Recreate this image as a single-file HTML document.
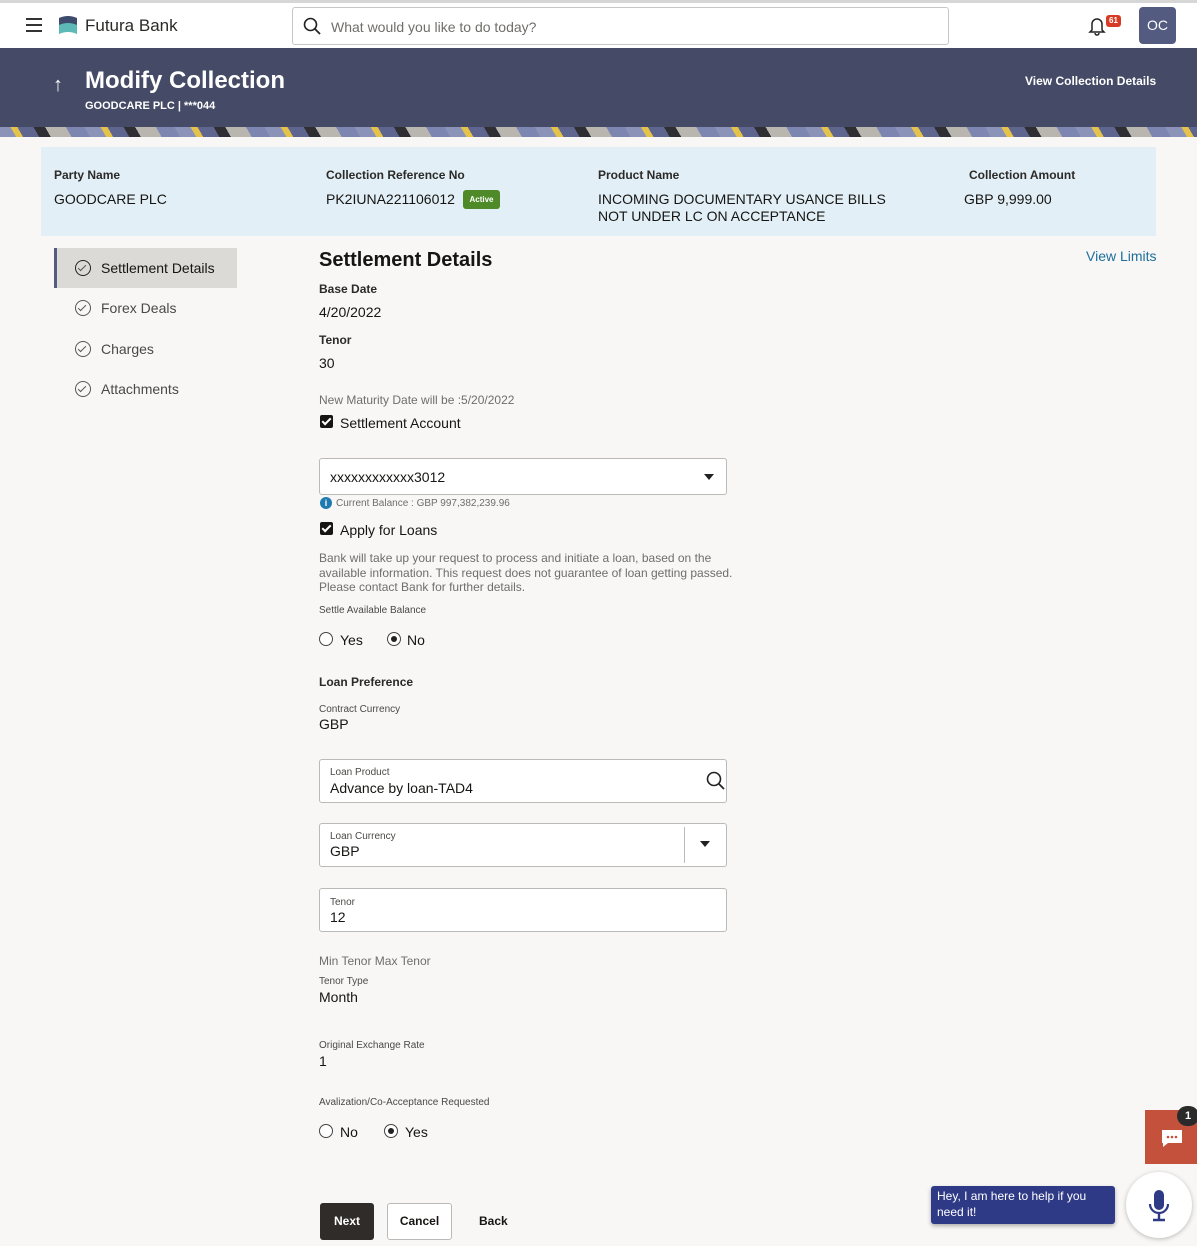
<!DOCTYPE html>
<html><head><meta charset="utf-8">
<style>
*{margin:0;padding:0;box-sizing:border-box}
body{width:1197px;height:1246px;background:#f8f7f5;font-family:"Liberation Sans",sans-serif;color:#161513;position:relative;overflow:hidden}
.a{position:absolute;white-space:nowrap}
.lbl{font-size:12px;font-weight:bold;color:#2b2a28}
.val{font-size:14px;color:#161513}
.sm{font-size:10px;color:#4a4947}
.box{position:absolute;left:319px;width:408px;background:#fff;border:1px solid #bcbab6;border-radius:3px}
.radio{position:absolute;width:14px;height:14px;border:1.5px solid #444;border-radius:50%;background:#fff}
.radio.on::after{content:"";position:absolute;left:2.5px;top:2.5px;width:6px;height:6px;border-radius:50%;background:#222}
.chk{position:absolute;width:13px;height:13px;background:#161513;border-radius:2px}
.chk::after{content:"";position:absolute;left:4px;top:1px;width:3px;height:7px;border:solid #fff;border-width:0 2px 2px 0;transform:rotate(45deg)}
.nav{position:absolute;left:54px;width:183px;height:40px;font-size:14px;color:#4a4947}
.nav .c{position:absolute;left:21px;top:12px;width:16px;height:16px;border:1.5px solid #555;border-radius:50%}
.nav .c::after{content:"";position:absolute;left:4px;top:1.5px;width:3px;height:7px;border:solid #555;border-width:0 1.5px 1.5px 0;transform:rotate(45deg)}
.nav span{position:absolute;left:47px;top:12px}
</style></head><body>
<div class="a" style="left:0;top:0;width:1197px;height:48px;background:#fff;border-top:3px solid #d6d6d6"></div>
<div class="a" style="left:26px;top:18px;width:16px;height:2px;background:#333;box-shadow:0 6px 0 #333,0 12px 0 #333"></div>
<svg class="a" style="left:58px;top:15px" width="20" height="20"><path d="M1 3 Q10 -1 19 3 V13 Q10 9 1 13Z" fill="#3e4b6d"/><path d="M1 10 Q10 6 19 10 V19 Q10 15 1 19Z" fill="#5cb9b6"/></svg>
<div class="a" style="left:85px;top:16px;font-size:17px;color:#2b2a28">Futura Bank</div>
<div class="a" style="left:292px;top:7px;width:657px;height:38px;border:1px solid #c8c6c2;border-radius:3px;background:#fff"></div>
<svg class="a" style="left:303px;top:17px" width="18" height="18"><circle cx="7.5" cy="7.5" r="6" fill="none" stroke="#222" stroke-width="1.6"/><path d="M12 12l5 5" stroke="#222" stroke-width="1.8"/></svg>
<div class="a" style="left:331px;top:19px;font-size:14px;color:#6f6e6b">What would you like to do today?</div>
<svg class="a" style="left:1088px;top:16px" width="18" height="20"><path d="M4 14V8a5 5 0 0110 0v6l2 2H2z" fill="none" stroke="#222" stroke-width="1.5"/><path d="M7 17a2 2 0 004 0" fill="none" stroke="#222" stroke-width="1.5"/></svg>
<div class="a" style="left:1106px;top:15px;width:15px;height:12px;background:#d63b25;border-radius:3px;color:#fff;font-size:8px;font-weight:bold;text-align:center;line-height:12px">61</div>
<div class="a" style="left:1139px;top:7px;width:37px;height:37px;background:#545b80;border-radius:4px;color:#fff;font-size:14px;text-align:center;line-height:37px">OC</div>

<div class="a" style="left:0;top:48px;width:1197px;height:80px;background:#454a66"></div>
<div class="a" style="left:0;top:127px;width:1197px;height:10px;background:repeating-linear-gradient(60deg,#8b93b8 0 14px,#e5c24a 14px 20px,#5e6690 20px 34px,#2f2f33 34px 44px,#b9b6b0 44px 62px,#7d86b0 62px 78px)"></div>
<div class="a" style="left:53px;top:74px;font-size:20px;color:#fff">↑</div>
<div class="a" style="left:85px;top:67px;font-size:24px;font-weight:bold;color:#fff">Modify Collection</div>
<div class="a" style="left:85px;top:100px;font-size:11px;font-weight:bold;color:#fff">GOODCARE PLC | ***044</div>
<div class="a" style="left:1025px;top:74px;font-size:12px;font-weight:bold;color:#fff">View Collection Details</div>

<div class="a" style="left:41px;top:147px;width:1115px;height:89px;background:#e2eff6"></div>
<div class="a lbl" style="left:54px;top:168px">Party Name</div>
<div class="a val" style="left:54px;top:191px">GOODCARE PLC</div>
<div class="a lbl" style="left:326px;top:168px">Collection Reference No</div>
<div class="a val" style="left:326px;top:191px">PK2IUNA221106012</div>
<div class="a" style="left:463px;top:190px;width:37px;height:19px;background:#4e8a28;border-radius:3px;color:#fff;font-size:8px;font-weight:bold;text-align:center;line-height:19px">Active</div>
<div class="a lbl" style="left:598px;top:168px">Product Name</div>
<div class="a val" style="left:598px;top:191px;line-height:17px">INCOMING DOCUMENTARY USANCE BILLS<br>NOT UNDER LC ON ACCEPTANCE</div>
<div class="a lbl" style="left:969px;top:168px">Collection Amount</div>
<div class="a val" style="left:964px;top:191px">GBP 9,999.00</div>

<div class="nav" style="top:248px;background:#dcdad7;border-left:3px solid #545b80;color:#161513"><div class="c" style="left:18px;border-color:#222"></div><span style="left:44px">Settlement Details</span></div>
<div class="nav" style="top:288px"><div class="c"></div><span>Forex Deals</span></div>
<div class="nav" style="top:329px"><div class="c"></div><span>Charges</span></div>
<div class="nav" style="top:369px"><div class="c"></div><span>Attachments</span></div>

<div class="a" style="left:319px;top:249px;font-size:20px;font-weight:bold">Settlement Details</div>
<div class="a" style="left:1086px;top:248px;font-size:14px;color:#1c6f9c">View Limits</div>
<div class="a lbl" style="left:319px;top:282px">Base Date</div>
<div class="a val" style="left:319px;top:304px">4/20/2022</div>
<div class="a lbl" style="left:319px;top:333px">Tenor</div>
<div class="a val" style="left:319px;top:355px">30</div>
<div class="a" style="left:319px;top:393px;font-size:12px;color:#6f6e6b">New Maturity Date will be :5/20/2022</div>
<div class="chk" style="left:320px;top:415px"></div>
<div class="a val" style="left:340px;top:415px">Settlement Account</div>
<div class="box" style="top:458px;height:37px"></div>
<div class="a val" style="left:330px;top:469px">xxxxxxxxxxxx3012</div>
<div class="a" style="left:704px;top:474px;border:5px solid transparent;border-top:6px solid #222"></div>
<div class="a" style="left:320px;top:497px;width:12px;height:12px;border-radius:50%;background:#1f7ab0;color:#fff;font-size:9px;font-weight:bold;text-align:center;line-height:12px">i</div>
<div class="a" style="left:336px;top:498px;font-size:10px;color:#6f6e6b">Current Balance : GBP 997,382,239.96</div>
<div class="chk" style="left:320px;top:522px"></div>
<div class="a val" style="left:340px;top:522px">Apply for Loans</div>
<div class="a" style="left:319px;top:551px;font-size:12px;color:#6f6e6b;line-height:14.5px">Bank will take up your request to process and initiate a loan, based on the<br>available information. This request does not guarantee of loan getting passed.<br>Please contact Bank for further details.</div>
<div class="a sm" style="left:319px;top:605px">Settle Available Balance</div>
<div class="radio" style="left:319px;top:632px"></div><div class="a val" style="left:340px;top:632px">Yes</div>
<div class="radio on" style="left:387px;top:632px"></div><div class="a val" style="left:407px;top:632px">No</div>
<div class="a lbl" style="left:319px;top:675px">Loan Preference</div>
<div class="a sm" style="left:319px;top:704px">Contract Currency</div>
<div class="a val" style="left:319px;top:716px">GBP</div>
<div class="box" style="top:759px;height:44px"></div>
<div class="a sm" style="left:330px;top:767px">Loan Product</div>
<div class="a val" style="left:330px;top:780px">Advance by loan-TAD4</div>
<svg class="a" style="left:706px;top:771px" width="20" height="20"><circle cx="8" cy="8" r="6.5" fill="none" stroke="#222" stroke-width="1.6"/><path d="M13 13l5 5" stroke="#222" stroke-width="1.8"/></svg>
<div class="box" style="top:823px;height:44px"></div>
<div class="a" style="left:684px;top:827px;width:1px;height:36px;background:#bcbab6"></div>
<div class="a sm" style="left:330px;top:831px">Loan Currency</div>
<div class="a val" style="left:330px;top:843px">GBP</div>
<div class="a" style="left:700px;top:841px;border:5px solid transparent;border-top:6px solid #222"></div>
<div class="box" style="top:888px;height:44px"></div>
<div class="a sm" style="left:330px;top:897px">Tenor</div>
<div class="a val" style="left:330px;top:909px">12</div>
<div class="a" style="left:319px;top:954px;font-size:12px;color:#6f6e6b">Min Tenor Max Tenor</div>
<div class="a sm" style="left:319px;top:976px">Tenor Type</div>
<div class="a val" style="left:319px;top:989px">Month</div>
<div class="a sm" style="left:319px;top:1040px">Original Exchange Rate</div>
<div class="a val" style="left:319px;top:1053px">1</div>
<div class="a sm" style="left:319px;top:1097px">Avalization/Co-Acceptance Requested</div>
<div class="radio" style="left:319px;top:1124px"></div><div class="a val" style="left:340px;top:1124px">No</div>
<div class="radio on" style="left:384px;top:1124px"></div><div class="a val" style="left:405px;top:1124px">Yes</div>
<div class="a" style="left:320px;top:1203px;width:54px;height:37px;background:#2f2c2a;border-radius:3px;color:#fff;font-size:12px;font-weight:bold;text-align:center;line-height:37px">Next</div>
<div class="a" style="left:387px;top:1203px;width:65px;height:37px;border:1px solid #bcbab6;background:#fff;border-radius:3px;font-size:12px;font-weight:bold;text-align:center;line-height:35px">Cancel</div>
<div class="a" style="left:479px;top:1214px;font-size:12px;font-weight:bold">Back</div>

<div class="a" style="left:1145px;top:1110px;width:52px;height:54px;background:#c4513c"></div>
<svg class="a" style="left:1160px;top:1128px" width="24" height="20"><path d="M2 2h20v13H8l-5 4v-4H2z" fill="#fff"/><circle cx="8" cy="9" r="1.3" fill="#c4513c"/><circle cx="12" cy="9" r="1.3" fill="#c4513c"/><circle cx="16" cy="9" r="1.3" fill="#c4513c"/></svg>
<div class="a" style="left:1177px;top:1106px;width:22px;height:20px;background:#2a2a2a;border-radius:10px;color:#fff;font-size:11px;font-weight:bold;text-align:center;line-height:20px">1</div>
<div class="a" style="left:931px;top:1186px;width:184px;height:38px;background:#2e3a85;border-radius:3px;color:#fff;font-size:12px;line-height:16px;padding:2px 6px;white-space:normal;box-shadow:0 2px 4px rgba(0,0,0,.3)">Hey, I am here to help if you need it!</div>
<div class="a" style="left:1126px;top:1172px;width:66px;height:66px;border-radius:50%;background:#fff;box-shadow:0 1px 5px rgba(0,0,0,.25)"></div>
<svg class="a" style="left:1146px;top:1188px" width="26" height="36"><rect x="8" y="2" width="10" height="20" rx="5" fill="#2e3a85"/><path d="M4 16a9 9 0 0018 0" fill="none" stroke="#2e3a85" stroke-width="2.2"/><path d="M13 25v6M7 32h12" stroke="#2e3a85" stroke-width="2.4"/></svg>
</body></html>
